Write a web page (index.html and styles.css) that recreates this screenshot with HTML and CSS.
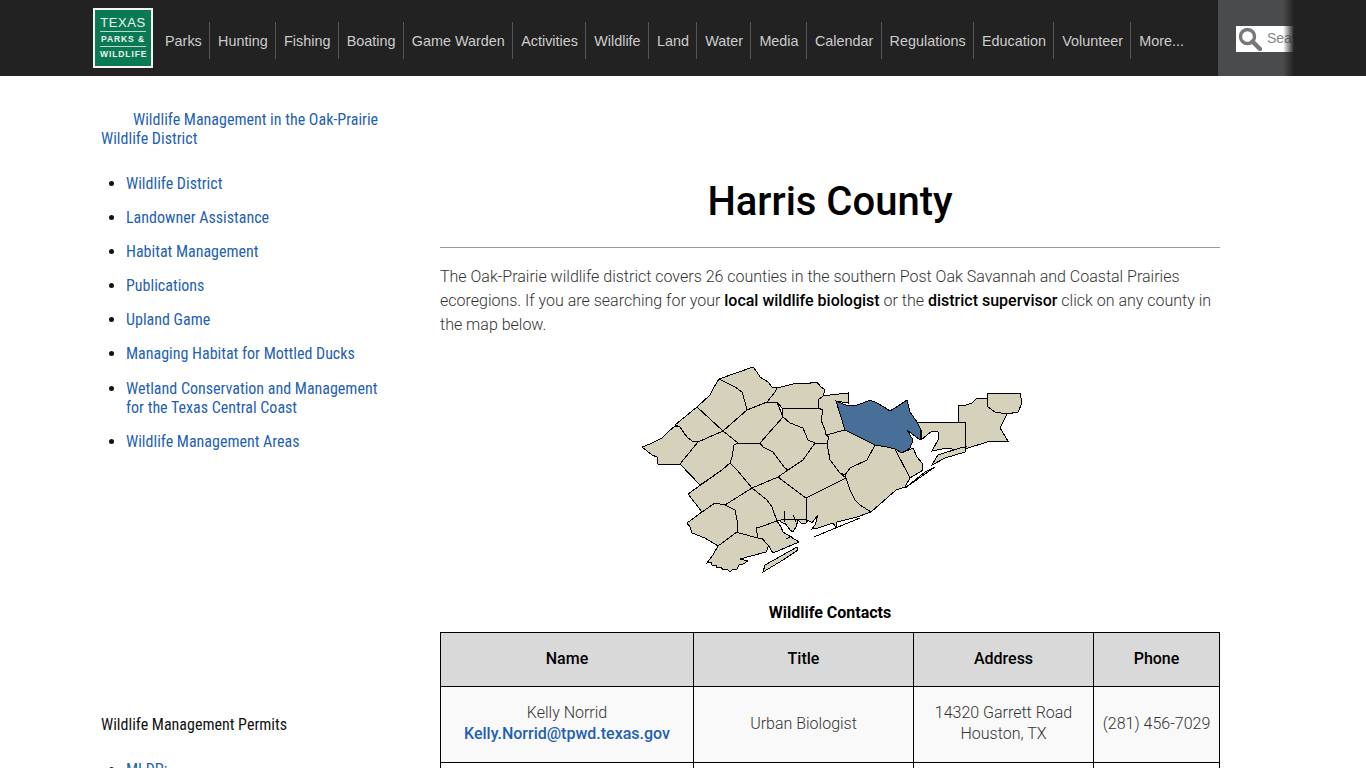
FILE: index.html
```html
<!DOCTYPE html>
<html lang="en">
<head>
  <meta charset="UTF-8">
  <meta name="viewport" content="width=device-width, initial-scale=1.0">
  <title>Harris County</title>
  <link rel="stylesheet" href="styles.css">
</head>
<body>
  <!-- top bar -->
  <header class="top__bar">
    <a class="logo" href="#">
      <span class="logo__big">TEXAS</span>
      <span class="logo__small">PARKS &amp;</span>
      <span class="logo__small">WILDLIFE</span>
    </a>
    <nav class="top__nav">
      <a href="#">Parks</a>
      <a href="#">Hunting</a>
      <a href="#">Fishing</a>
      <a href="#">Boating</a>
      <a href="#">Game Warden</a>
      <a href="#">Activities</a>
      <a href="#">Wildlife</a>
      <a href="#">Land</a>
      <a href="#">Water</a>
      <a href="#">Media</a>
      <a href="#">Calendar</a>
      <a href="#">Regulations</a>
      <a href="#">Education</a>
      <a href="#">Volunteer</a>
      <a href="#">More...</a>
    </nav>
    <div class="search__panel">
      <div class="search__box">
        <svg class="search__icon" viewBox="0 0 24 24" width="24" height="24">
          <circle cx="9.5" cy="9.5" r="7" fill="none" stroke="#777" stroke-width="3.4"/>
          <path d="M14.5 14.5 L22 22" stroke="#777" stroke-width="4.4" stroke-linecap="round"/>
        </svg>
        <span class="search__text">Search</span>
      </div>
      <div class="search__fade"></div>
    </div>
  </header>

  <div class="page__wrap">
    <!-- side column -->
    <aside class="side__col">
      <p class="side__title"><a href="#">Wildlife Management in the Oak-Prairie Wildlife District</a></p>
      <ul class="side__list">
        <li><a href="#">Wildlife District</a></li>
        <li><a href="#">Landowner Assistance</a></li>
        <li><a href="#">Habitat Management</a></li>
        <li><a href="#">Publications</a></li>
        <li><a href="#">Upland Game</a></li>
        <li><a href="#">Managing Habitat for Mottled Ducks</a></li>
        <li><a href="#">Wetland Conservation and Management for the Texas Central Coast</a></li>
        <li><a href="#">Wildlife Management Areas</a></li>
      </ul>
      <p class="side__heading">Wildlife Management Permits</p>
      <ul class="side__list">
        <li><a href="#">MLDP:</a></li>
      </ul>
    </aside>

    <!-- main column -->
    <main class="main__col">
      <h1>Harris County</h1>
      <hr>
      <p class="intro">The Oak-Prairie wildlife district covers 26 counties in the southern Post Oak Savannah and Coastal Prairies ecoregions. If you are searching for your <strong>local wildlife biologist</strong> or the <strong>district supervisor</strong> click on any county in the map below.</p>

      <div class="map__wrap">
        <svg class="county__map" viewBox="640 365 384 210" width="384" height="210">
          <g class="county">
            <polygon points="642,447 650,444 662,438 668,432 675,426 680,427 684,433 687,437 692,441 698,442 680,464 658,464 657,457 652,455"/>
            <polygon points="675,425 697,407 723,431 698,442 692,441 687,437 684,433 680,427"/>
            <polygon points="697,407 710,395 714,387 719,379 735,387 742,392 745,402 747,410 723,431"/>
            <polygon points="719,379 753,367 757,372 760,377 768,382 772,387 777,388 775,392 767,402 747,410 745,402 742,392 735,387"/>
            <polygon points="723,431 747,410 767,402 777,402 783,417 760,443 738,443"/>
            <polygon points="777,388 785,386 793,384 803,383 808,384 813,382 817,382 820,386 825,390 823,396 818,400 818,408 782,408 777,402 767,402 775,392"/>
            <polygon points="782,408 818,408 823,410 821,420 825,430 829,437 827,443 815,443 808,440 803,428 790,423 783,417"/>
            <polygon points="760,443 783,417 790,423 803,428 808,440 815,443 803,460 788,470 785,468 773,452 763,447"/>
            <polygon points="738,443 760,443 763,447 773,452 785,468 788,470 778,477 752,488 737,470 730,463 732,457 734,445"/>
            <polygon points="698,442 723,431 738,443 734,445 732,457 730,463 722,470 700,485 680,464"/>
            <polygon points="688,494 722,470 730,463 737,470 752,488 725,505 715,503 702,512"/>
            <polygon points="687,523 702,512 715,503 725,505 735,510 737,520 737,532 718,546 705,538 692,533 690,527"/>
            <polygon points="725,505 752,488 767,500 772,507 777,521 760,527 756,528 758,538 739,533 737,532 737,520 735,510"/>
            <polygon points="739,533 758,538 762,538 765,542 769,545 766,552 740,559 748,561 743,564 739,565 737,569 733,569 730,572 727,569 723,570 721,567 717,568 716,565 712,565 711,562 707,563 713,555 718,546 737,532"/>
            <polygon points="756,528 760,527 777,521 781,527 783,532 799,542 773,553 768,545 765,542 762,538 758,538"/>
            <polygon points="752,488 778,477 806,498 806,523 802,524 798,520 796,527 793,532 790,530 785,523 783,523 778,520 777,521 772,507 767,500"/>
            <polygon points="778,477 788,470 803,460 815,443 827,443 830,460 840,473 846,478 806,498"/>
            <polygon points="806,498 846,478 850,490 855,500 860,505 871,512 857,517 837,522 836,527 833,523 818,528 812,529 815,525 818,515 812,523 808,520 806,523"/>
            <polygon points="846,478 845,475 850,468 867,460 875,445 887,447 895,449 910,478 905,487 896,490 871,512 860,505 855,500 850,490"/>
            <polygon points="826,435 845,430 875,445 867,460 850,468 845,475 840,473 830,460 827,443 829,437"/>
            <polygon points="818,400 823,396 830,395 848,393 848,403 836,401 845,430 826,435 825,430 821,420 823,410 818,408"/>
            <polygon points="917,423 937,422 965,422 966,447 957,450 947,448 932,451 938,440 938,432 932,431 921,440 921,430"/>
            <polygon points="958,405 966,405 972,403 977,398 987,398 988,407 995,412 1007,414 1000,428 1008,441 990,441 965,449 965,422 958,422"/>
            <polygon points="987,393 1020,393 1022,403 1018,412 1007,414 995,412 988,407 987,398"/>
            <polygon points="895,449 902,453 913,448 917,457 922,463 923,470 910,478"/>
            <polygon points="966,447 965,452 945,458 932,465 938,455 960,448"/>
            <polygon points="935,467 905,488 925,472"/>
            <polygon points="763,572 765,565 797,547 798,550 783,560"/>
          </g>
          <polygon class="county__active" points="836,401 848,406 857,405 863,403 870,400 877,403 884,407 890,411 898,406 907,400 910,412 917,422 921,430 920,440 907,430 910,435 913,440 910,448 902,453 895,449 887,447 875,445 845,430"/>
          <polyline class="coast__line" points="814,537 838,527 860,518"/>
          <polyline class="coast__line" points="777,521 785,519 806,520"/>
          <polyline class="coast__line" points="784,511 785,522"/>
          <polyline class="coast__line" points="793,515 796,522"/>
          <polyline class="coast__line" points="786,539 792,536"/>
        </svg>
      </div>

      <p class="table__caption">Wildlife Contacts</p>
      <table class="contact__table">
        <colgroup>
          <col class="col__name">
          <col class="col__title">
          <col class="col__address">
          <col class="col__phone">
        </colgroup>
        <thead>
          <tr>
            <th>Name</th>
            <th>Title</th>
            <th>Address</th>
            <th>Phone</th>
          </tr>
        </thead>
        <tbody>
          <tr class="row__shaded">
            <td>Kelly Norrid<br><a href="#">Kelly.Norrid@tpwd.texas.gov</a></td>
            <td>Urban Biologist</td>
            <td>14320 Garrett Road<br>Houston, TX</td>
            <td>(281) 456-7029</td>
          </tr>
          <tr>
            <td></td>
            <td></td>
            <td></td>
            <td></td>
          </tr>
        </tbody>
      </table>
    </main>
  </div>
</body>
</html>
```

FILE: styles.css
```css
* {
  margin: 0;
  padding: 0;
  box-sizing: border-box;
}

body {
  font-family: Roboto, sans-serif;
  font-size: 16px;
  font-weight: 300;
  color: #333;
  background: #fff;
}

a {
  color: #1f5fb4;
  text-decoration: none;
}

/* top bar */
.top__bar {
  height: 76px;
  display: flex;
  align-items: center;
  padding-left: 93px;
  background: #222;
  font-family: "Liberation Sans", Arial, sans-serif;
}

.logo {
  width: 60px;
  height: 60px;
  padding: 6px 5px 0;
  display: flex;
  flex-direction: column;
  align-items: center;
  flex-shrink: 0;
  background: #0a7a55;
  border: 2px solid #f4f4f4;
  color: #eef4f0;
}

.logo__big {
  width: 100%;
  padding-bottom: 1px;
  text-align: center;
  font-size: 13px;
  line-height: 14px;
  letter-spacing: 0.6px;
  border-bottom: 1px solid #bcd8cb;
  white-space: nowrap;
}

.logo__small {
  width: 100%;
  text-align: center;
  font-size: 8.5px;
  font-weight: 700;
  line-height: 14px;
  letter-spacing: 0.9px;
  border-bottom: 1px solid #bcd8cb;
  white-space: nowrap;
}

.logo__small:last-child {
  border-bottom: 0;
}

.top__nav {
  display: flex;
  align-items: center;
  margin-left: 4px;
  margin-top: 5px;
}

.top__nav a {
  height: 37px;
  padding: 0 7.3px 0 8px;
  line-height: 38px;
  font-size: 14.4px;
  color: #ccc;
  border-right: 1px solid #555;
  white-space: nowrap;
}

.top__nav a:last-child {
  border-right: 0;
}

.search__panel {
  position: absolute;
  left: 1218px;
  top: 0;
  width: 76px;
  height: 76px;
  padding: 26px 0 0 18px;
  background: #4a4b4d;
  overflow: hidden;
}

.search__box {
  width: 58px;
  height: 26px;
  display: flex;
  align-items: center;
  padding-left: 2px;
  overflow: hidden;
  background: #fff;
}

.search__icon {
  flex-shrink: 0;
}

.search__text {
  margin-left: 5px;
  margin-top: -2px;
  font-size: 14px;
  color: #888;
}

.search__fade {
  position: absolute;
  right: 0;
  top: 0;
  width: 11px;
  height: 76px;
  background: linear-gradient(to right, rgba(34, 34, 34, 0), #222);
}

/* columns */
.page__wrap {
  display: flex;
  align-items: flex-start;
  padding-left: 101px;
}

.side__col {
  width: 279px;
  margin-right: 60px;
  padding-top: 34px;
  font-family: "Roboto Condensed", "Liberation Sans Narrow", Roboto, sans-serif;
  font-stretch: condensed;
  font-weight: 400;
  line-height: 19px;
  color: #111;
}

.side__title {
  text-indent: 32px;
}

.side__list {
  list-style: disc;
  margin-top: 26px;
  padding-left: 25px;
}

.side__list li {
  margin-bottom: 15.1px;
}

.side__heading {
  margin-top: 264px;
}

.main__col {
  width: 780px;
  padding-top: 102px;
}

h1 {
  text-align: center;
  font-size: 40px;
  font-weight: 500;
  line-height: 48px;
  color: #000;
}

hr {
  margin-top: 21px;
  border: 0;
  border-top: 1px solid #999;
}

.intro {
  margin-top: 17px;
  line-height: 24px;
}

.intro strong {
  font-weight: 500;
  color: #000;
}

.map__wrap {
  margin-top: 28px;
  display: flex;
  justify-content: center;
}

.county__map {
  display: block;
  margin-left: 3px;
  shape-rendering: crispEdges;
}

.county polygon {
  fill: #d6d1ba;
  stroke: #000;
  stroke-width: 1;
}

.county__active {
  fill: #476f98;
  stroke: #000;
  stroke-width: 1;
}

.coast__line {
  fill: none;
  stroke: #000;
  stroke-width: 1;
}

.table__caption {
  margin-top: 28px;
  text-align: center;
  font-weight: 700;
  line-height: 20px;
  color: #000;
}

.contact__table {
  width: 779px;
  margin-top: 9px;
  border-collapse: collapse;
  table-layout: fixed;
  text-align: center;
}

.col__name { width: 253px; }
.col__title { width: 220px; }
.col__address { width: 180px; }
.col__phone { width: 126px; }

.contact__table th,
.contact__table td {
  border: 1px solid #000;
  padding: 14px 8px 17px;
  line-height: 21px;
}

.contact__table th {
  height: 54px;
  background: #d9d9d9;
  font-weight: 500;
  color: #000;
}

.contact__table td {
  height: 76px;
}

.row__shaded td {
  background: #f9f9f9;
}

.contact__table td a {
  font-weight: 500;
}
```
